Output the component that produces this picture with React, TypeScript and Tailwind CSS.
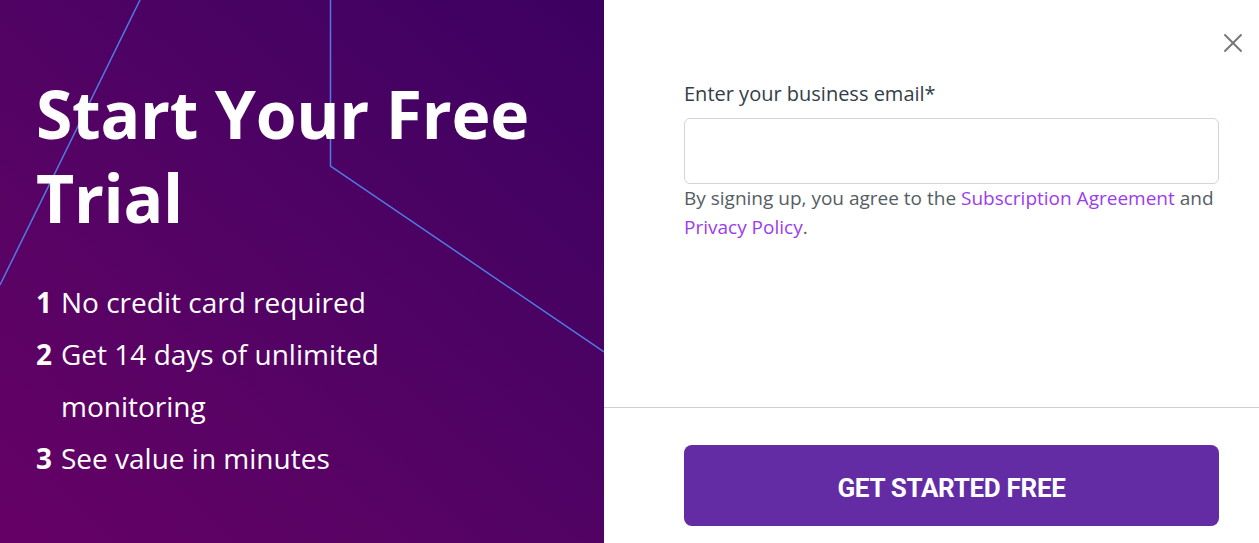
import { X } from 'lucide-react';

const items = [
  { n: '1', text: 'No credit card required' },
  { n: '2', text: 'Get 14 days of unlimited monitoring' },
  { n: '3', text: 'See value in minutes' },
];

function Decoration() {
  return (
    <svg className="absolute inset-0 h-full w-full pointer-events-none" viewBox="0 0 604 543" preserveAspectRatio="none" fill="none">
      <path d="M140 0 L0 285" stroke="#4f7be6" strokeWidth="1.5" />
      <path d="M330.5 0 V166 L604 352" stroke="#4f7be6" strokeWidth="1.5" />
    </svg>
  );
}

export default function App() {
  return (
    <div className="flex h-[543px] w-[1259px] overflow-hidden bg-white font-['Open_Sans',sans-serif]">
      <section className="relative w-[604px] shrink-0 bg-gradient-to-tr from-[#660066] to-[#3c0061] text-white">
        <Decoration />
        <div className="relative pl-9 pt-[71px]">
          <h1 className="w-[560px] text-[66px] font-bold leading-[84px] tracking-[-0.3px]">
            Start Your Free Trial
          </h1>
          <ol className="mt-[37px] w-[380px] text-[28px] leading-[52px]">
            {items.map((it) => (
              <li key={it.n} className="flex">
                <span className="w-[25px] shrink-0 font-bold">{it.n}</span>
                <span>{it.text}</span>
              </li>
            ))}
          </ol>
        </div>
      </section>

      <section className="relative flex flex-1 flex-col">
        <button className="absolute right-[10px] top-[27px] text-[#777]">
          <X size={32} strokeWidth={1.4} />
        </button>
        <div className="h-[408px] border-b border-[#cfcfcf] pl-20 pr-10 pt-[80px]">
          <label className="block text-[20px] leading-[28px] text-[#333e48]">Enter your business email*</label>
          <input
            type="email"
            className="mt-[10px] block h-[66px] w-full rounded-md border border-[#d0d5db] bg-white px-4 outline-none"
          />
          <p className="mt-0 text-[19px] leading-[29px] text-[#555d64]">
            By signing up, you agree to the{' '}
            <a className="text-[#9b3cf0]">Subscription Agreement</a> and{' '}
            <a className="text-[#9b3cf0]">Privacy Policy</a>.
          </p>
        </div>
        <div className="pl-20 pr-10 pt-[37px]">
          <button className="flex h-[81px] w-full items-center justify-center rounded-lg bg-[#632ca5] pt-[6px] font-['Roboto',sans-serif] text-[26px] font-bold tracking-[-0.3px] text-white">
            GET STARTED FREE
          </button>
        </div>
      </section>
    </div>
  );
}
